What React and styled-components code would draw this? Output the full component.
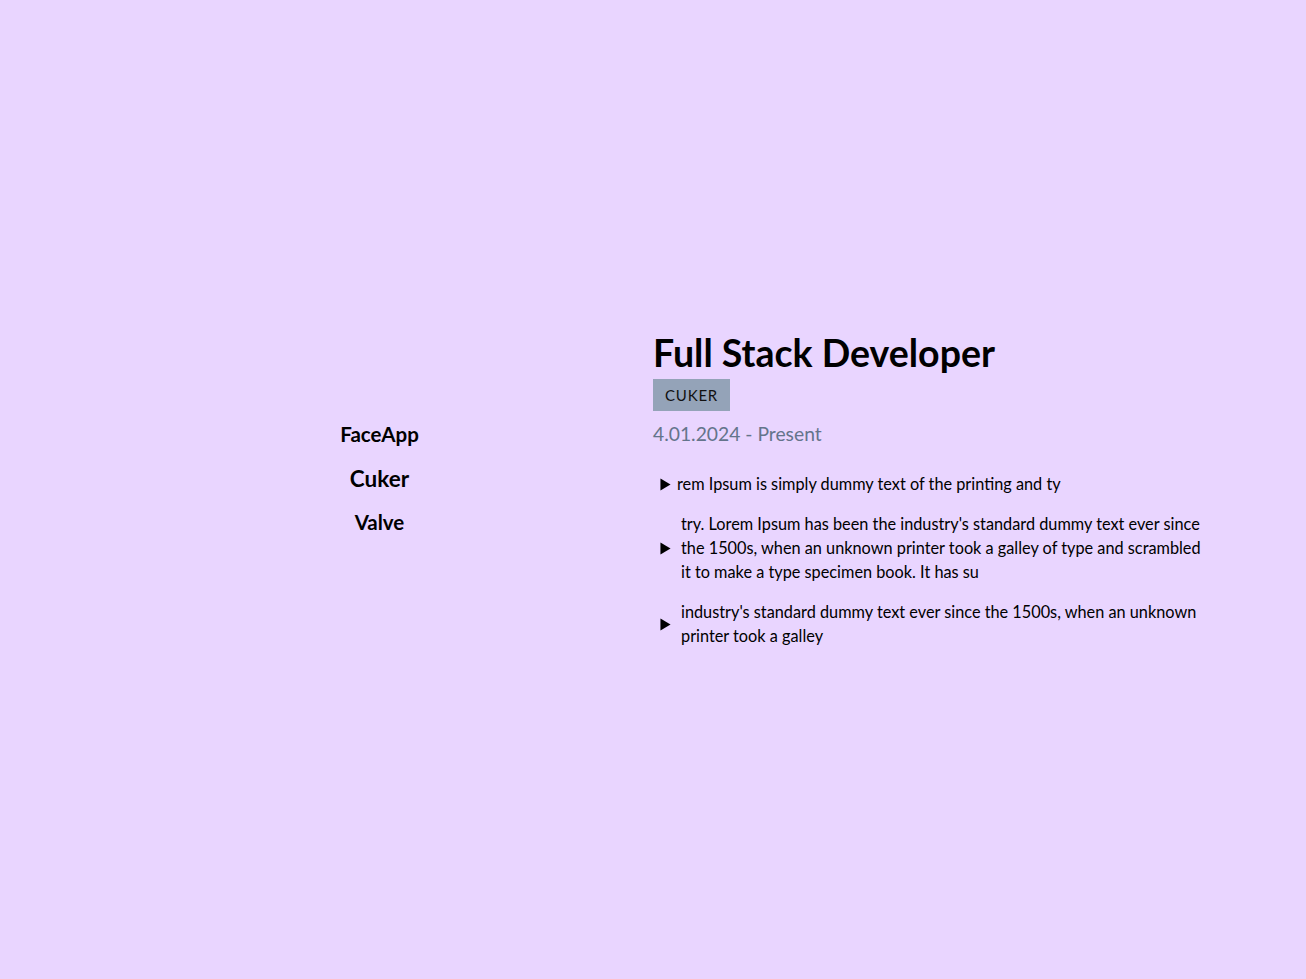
import React from 'react';
import styled, { createGlobalStyle } from 'styled-components';

const GlobalStyle = createGlobalStyle`
  * { box-sizing: border-box; }
  body {
    margin: 0;
    background: #e9d5ff;
    font-family: Lato, "Noto Sans", sans-serif;
    color: #000;
  }
`;

const companies = ["FaceApp", "Cuker", "Valve"];
const active = "Cuker";

const duties = [
    "rem Ipsum is simply dummy text of the printing and ty",
    "try. Lorem Ipsum has been the industry's standard dummy text ever since the 1500s, when an unknown printer took a galley of type and scrambled it to make a type specimen book. It has su",
    "industry's standard dummy text ever since the 1500s, when an unknown printer took a galley",
];

export default function App() {
    return (
        <>
            <GlobalStyle />
            <Page>
                <Experience>
                    <CompanyList>
                        {companies.map(name => (
                            <CompanyButton key={name} active={name === active}>{name}</CompanyButton>
                        ))}
                    </CompanyList>
                    <Details>
                        <Title>Full Stack Developer</Title>
                        <Badge>CUKER</Badge>
                        <Period>4.01.2024 - Present</Period>
                        <DutyList>
                            {duties.map((text, i) => (
                                <Duty key={i} short={i === 0}>
                                    <Marker viewBox="0 0 12 14">
                                        <path d="M0.5 0.5 L11.5 7 L0.5 13.5 Z" fill="#000" />
                                    </Marker>
                                    <DutyText>{text}</DutyText>
                                </Duty>
                            ))}
                        </DutyList>
                    </Details>
                </Experience>
            </Page>
        </>
    );
}

const Page = styled.main`
display: flex; align-items: center; justify-content: center;
min-height: 100vh;
padding: 0 80px 0 106px;
`;

const Experience = styled.section`
display: grid;
grid-template-columns: 547px 1fr;
align-items: center;
width: 100%;
`;

const CompanyList = styled.div`
display: flex; flex-direction: column; align-items: center;
gap: 17px;
padding-bottom: 22px;
`;

const CompanyButton = styled.button`
background: none; border: none; padding: 0;
font-family: inherit;
font-weight: 700;
font-size: ${props => props.active ? "22.5px" : "20.5px"};
line-height: 27px;
color: #000;
cursor: pointer;
`;

const Details = styled.div`
display: flex; flex-direction: column; align-items: flex-start;
`;

const Title = styled.h2`
margin: 0;
font-size: 37.5px;
font-weight: 700;
line-height: 44px;
`;

const Badge = styled.span`
margin-top: 4px;
background: #94a3b8;
color: #111;
font-size: 15px;
letter-spacing: 0.8px;
padding: 5px 12px;
line-height: 22px;
`;

const Period = styled.p`
margin: 11px 0 0;
color: #64748b;
font-size: 19.3px;
line-height: 24px;
`;

const DutyList = styled.ul`
list-style: none;
margin: 26px 0 0;
padding: 0 0 0 7px;
display: flex; flex-direction: column;
gap: 16px;
`;

const Duty = styled.li`
display: flex; align-items: center;
gap: ${props => props.short ? "6px" : "10px"};
`;

const Marker = styled.svg`
width: 11px; height: 13px;
flex-shrink: 0;
`;

const DutyText = styled.span`
font-size: 16.3px;
line-height: 24px;
max-width: 526px;
`;
